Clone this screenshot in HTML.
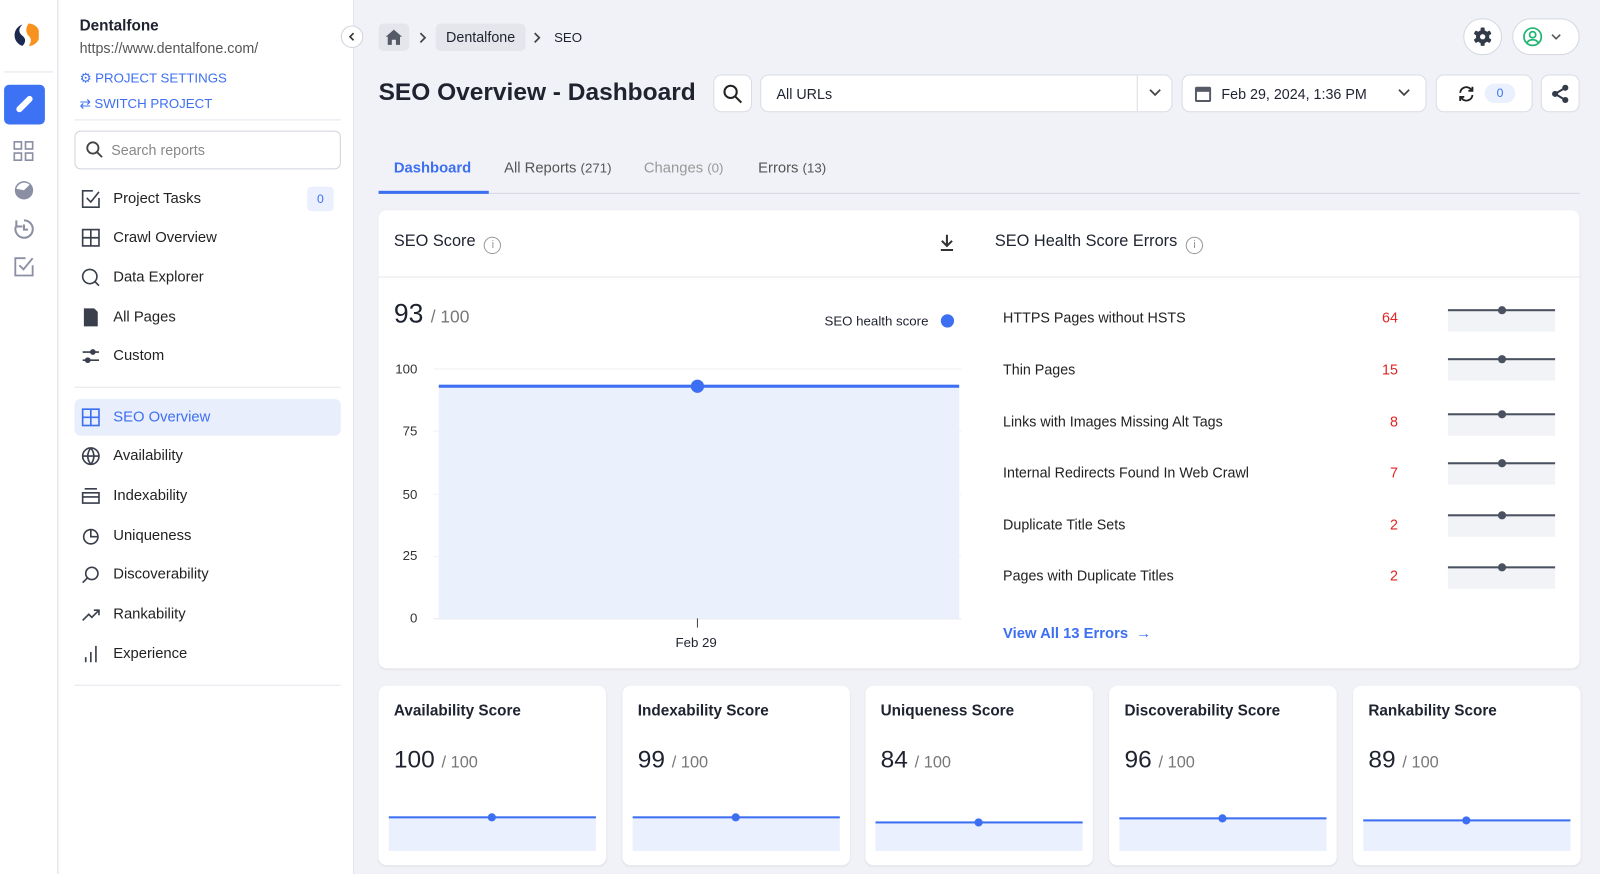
<!DOCTYPE html>
<html><head><meta charset="utf-8"><style>
*{box-sizing:border-box;margin:0;padding:0}
html,body{width:1600px;height:874px;overflow:hidden;background:#f1f2f7;font-family:"Liberation Sans",sans-serif;color:#1f2330}
#w{position:absolute;left:0;top:0;width:1568px;height:857px;transform:scale(1.0204);transform-origin:0 0}
.a{position:absolute}
.rail{left:0;top:0;width:57px;height:857px;background:#fff;border-right:1px solid #e3e5ec}
.side{left:58px;top:0;width:289px;height:857px;background:#fff;border-right:1px solid #e3e5ec}
.ni{position:absolute;left:15px;height:36px;width:261px;display:flex;align-items:center;font-size:14.5px;color:#222;border-radius:6px}
.ni svg{width:20px;height:20px;margin:0 12px 0 6px;fill:none;stroke:#3a3f4c;stroke-width:1.6}
.card{background:#fff;border-radius:8px;box-shadow:0 1px 2px rgba(0,0,0,.08)}
.btn{background:#fff;border:1px solid #d9dce4;border-radius:8px}
.sc{top:672px;width:223px;height:176px}
.sc h4{position:absolute;left:15px;top:16px;font-size:15px;font-weight:bold;color:#1f2330}
.sc .v{position:absolute;left:15px;top:59px;font-size:24px}
.sc .v span{font-size:16px;color:#777}
.sc .f{position:absolute;left:10px;right:10px;top:128px;height:34px;background:#eaf0fd;border-top:2px solid #3d6ff2}
.sc .d{position:absolute;width:8px;height:8px;border-radius:50%;background:#3d6ff2;left:97px;top:-5px}
.er{position:absolute;left:983px;font-size:14px;color:#222}
.en{position:absolute;left:1340px;width:30px;text-align:right;font-size:14px;color:#e02424}
.sp{position:absolute;left:1419px;width:105px;height:22px;background:#f2f3f6;border-top:2px solid #4a5160}
.sp i{position:absolute;left:49px;top:-5px;width:8px;height:8px;border-radius:50%;background:#4a5160}
.yl{position:absolute;width:40px;text-align:right;left:369px;font-size:13px;color:#333}
.chev{position:absolute}
</style></head><body><div id="w">
<div class="a rail">
<svg class="a" style="left:10px;top:20px" width="28" height="28" viewBox="0 0 28 28"><path d="M18 3a11 11 0 0 1 0 22c3-4 3-7 0-10s-3-8 0-12z" fill="#f7921e"/><path d="M12 4c-4 4-4 8 0 11s3 7 0 10A11 11 0 0 1 12 4z" fill="#1b2a4e"/></svg>
<div class="a" style="left:4px;top:70px;width:48px;height:1px;background:#e3e5ec"></div>
<div class="a" style="left:4px;top:83px;width:40px;height:39px;background:#3d72f5;border-radius:5px"></div>
<svg class="a" style="left:14px;top:92px" width="20" height="20" viewBox="0 0 20 20"><path d="M5 15L15 5" stroke="#fff" stroke-width="6" stroke-linecap="round"/></svg>
<svg class="a" style="left:13px;top:138px" width="21" height="21" viewBox="0 0 21 21" fill="none" stroke="#8a8fa3" stroke-width="1.6"><rect x="1" y="1" width="7" height="7"/><rect x="12" y="1" width="7" height="7"/><rect x="1" y="12" width="7" height="7"/><rect x="12" y="12" width="7" height="7"/></svg>
<svg class="a" style="left:13px;top:176px" width="21" height="21" viewBox="0 0 21 21"><circle cx="10.5" cy="10.5" r="9" fill="#8a8fa3"/><path d="M3 9a8 8 0 0 1 13-4L10.5 10.5z" fill="#fff"/></svg>
<svg class="a" style="left:13px;top:214px" width="21" height="21" viewBox="0 0 21 21" fill="none" stroke="#8a8fa3" stroke-width="2"><path d="M10.5 2a8.5 8.5 0 1 1-8 6M10.5 6v5h4M3 2v6h6"/></svg>
<svg class="a" style="left:13px;top:251px" width="21" height="21" viewBox="0 0 21 21" fill="none" stroke="#8a8fa3" stroke-width="1.8"><path d="M12 2H2v17h17V9M6 9l4 4 9-11"/></svg>
</div>
<div class="a side">
<div class="a" style="left:20px;top:17px;font-size:15px;font-weight:bold">Dentalfone</div>
<div class="a" style="left:20px;top:39px;font-size:14px;color:#555">https://www.dentalfone.com/</div>
<div class="a" style="left:20px;top:69px;font-size:13px;color:#3d6ff2">⚙ PROJECT SETTINGS</div>
<div class="a" style="left:20px;top:94px;font-size:13px;color:#3d6ff2">⇄ SWITCH PROJECT</div>
<div class="a" style="left:15px;top:117px;width:261px;height:1px;background:#e3e5ec"></div>
<div class="a" style="left:15px;top:128px;width:261px;height:38px;border:1px solid #cfd3dc;border-radius:6px;font-size:14px;color:#888;padding:10px 0 0 35px">Search reports</div>
<svg class="a" style="left:26px;top:138px" width="18" height="18" viewBox="0 0 18 18" fill="none" stroke="#444" stroke-width="1.8"><circle cx="7" cy="7" r="5.5"/><path d="M11 11l5 5"/></svg>
<div class="ni" style="top:177px"><svg viewBox="0 0 20 20"><path d="M12 2H2v16h16V9M6 9l4 4 8-10"/></svg>Project Tasks</div>
<div class="a" style="left:243px;top:183px;width:26px;height:24px;background:#eaf0fd;border-radius:4px;color:#3d6ff2;font-size:12px;text-align:center;line-height:24px">0</div>
<div class="ni" style="top:215px"><svg viewBox="0 0 20 20"><rect x="2" y="2" width="16" height="16"/><path d="M10 2v16M2 10h16"/></svg>Crawl Overview</div>
<div class="ni" style="top:254px"><svg viewBox="0 0 20 20"><circle cx="9" cy="9" r="7"/><path d="M14 14l4 4"/></svg>Data Explorer</div>
<div class="ni" style="top:293px"><svg viewBox="0 0 20 20"><path d="M4 2h9l3 3v13H4z" fill="#3a3f4c"/></svg>All Pages</div>
<div class="ni" style="top:331px"><svg viewBox="0 0 20 20"><path d="M2 6h16M2 14h16"/><circle cx="12" cy="6" r="2" fill="#3a3f4c"/><circle cx="7" cy="14" r="2" fill="#3a3f4c"/></svg>Custom</div>
<div class="a" style="left:15px;top:379px;width:261px;height:1px;background:#e3e5ec"></div>
<div class="ni" style="top:391px;background:#e8eefc;color:#3d6ff2"><svg viewBox="0 0 20 20" style="stroke:#3d6ff2"><rect x="2" y="2" width="16" height="16"/><path d="M10 2v16M2 10h16"/></svg>SEO Overview</div>
<div class="ni" style="top:429px"><svg viewBox="0 0 20 20"><circle cx="10" cy="10" r="8"/><path d="M2 10h16M10 2c-4 5-4 11 0 16M10 2c4 5 4 11 0 16"/></svg>Availability</div>
<div class="ni" style="top:468px"><svg viewBox="0 0 20 20"><path d="M4 3h12M2 7h16v10H2zM2 11h16"/></svg>Indexability</div>
<div class="ni" style="top:507px"><svg viewBox="0 0 20 20"><circle cx="10" cy="11" r="7"/><path d="M10 4v7h7"/></svg>Uniqueness</div>
<div class="ni" style="top:545px"><svg viewBox="0 0 20 20"><circle cx="11" cy="9" r="6"/><path d="M7 13l-5 5"/></svg>Discoverability</div>
<div class="ni" style="top:584px"><svg viewBox="0 0 20 20"><path d="M2 16l6-6 3 3 7-7M13 6h5v5"/></svg>Rankability</div>
<div class="ni" style="top:623px"><svg viewBox="0 0 20 20"><path d="M5 18v-5M10 18V8M15 18V2"/></svg>Experience</div>
<div class="a" style="left:15px;top:671px;width:261px;height:1px;background:#e3e5ec"></div>
</div>
<div class="a" style="left:334px;top:25px;width:22px;height:22px;border-radius:50%;background:#fff;border:1px solid #d0d3db"></div>
<svg class="a" style="left:340px;top:31px" width="10" height="10" viewBox="0 0 10 10"><path d="M6.5 1.5L3 5l3.5 3.5" stroke="#333" stroke-width="1.6" fill="none"/></svg>
<!-- breadcrumb -->
<div class="a" style="left:371px;top:23px;width:30px;height:27px;background:#e4e6ec;border-radius:5px"></div>
<svg class="a" style="left:377px;top:28px" width="18" height="17" viewBox="0 0 18 17"><path d="M9 1L1 8h2v8h4v-5h4v5h4V8h2z" fill="#555a66"/></svg>
<svg class="a" style="left:409px;top:31px" width="10" height="12" viewBox="0 0 10 12"><path d="M3 1.5L7.5 6 3 10.5" stroke="#444" stroke-width="1.7" fill="none"/></svg>
<div class="a" style="left:427px;top:23px;width:88px;height:27px;background:#e4e6ec;border-radius:5px;font-size:14px;text-align:center;line-height:27px">Dentalfone</div>
<svg class="a" style="left:521px;top:31px" width="10" height="12" viewBox="0 0 10 12"><path d="M3 1.5L7.5 6 3 10.5" stroke="#444" stroke-width="1.7" fill="none"/></svg>
<div class="a" style="left:543px;top:29px;font-size:13px">SEO</div>
<div class="a" style="left:1434px;top:18px;width:38px;height:36px;border-radius:18px;background:#fff;border:1px solid #d5d8e0"></div>
<svg class="a" style="left:1443px;top:26px" width="20" height="20" viewBox="0 0 20 20"><g fill="#333b48"><circle cx="10" cy="10" r="6.5"/><rect x="8" y="1" width="4" height="18" rx="1"/><rect x="8" y="1" width="4" height="18" rx="1" transform="rotate(60 10 10)"/><rect x="8" y="1" width="4" height="18" rx="1" transform="rotate(120 10 10)"/></g><circle cx="10" cy="10" r="2.6" fill="#fff"/></svg>
<div class="a" style="left:1482px;top:18px;width:66px;height:36px;border-radius:18px;background:#fff;border:1px solid #d5d8e0"></div>
<svg class="a" style="left:1492px;top:26px" width="20" height="20" viewBox="0 0 20 20" fill="none" stroke="#22b573" stroke-width="1.7"><circle cx="10" cy="10" r="8.5"/><circle cx="10" cy="8" r="3"/><path d="M4.5 16c2-4 9-4 11 0"/></svg>
<svg class="a" style="left:1519px;top:31px" width="12" height="10" viewBox="0 0 12 10"><path d="M2 3l4 4 4-4" stroke="#555" stroke-width="1.6" fill="none"/></svg>
<!-- title row -->
<div class="a" style="left:371px;top:77px;font-size:24px;font-weight:bold;color:#1f2330">SEO Overview - Dashboard</div>
<div class="a btn" style="left:699px;top:73px;width:38px;height:37px"></div>
<svg class="a" style="left:708px;top:82px" width="20" height="20" viewBox="0 0 20 20" fill="none" stroke="#222" stroke-width="2"><circle cx="8" cy="8" r="6"/><path d="M12.5 12.5l6 6"/></svg>
<div class="a btn" style="left:745px;top:73px;width:404px;height:37px;font-size:14px;padding:10px 0 0 15px">All URLs</div>
<div class="a" style="left:1114px;top:74px;width:1px;height:35px;background:#d9dce4"></div>
<svg class="a" style="left:1125px;top:85px" width="14" height="12" viewBox="0 0 14 12"><path d="M2 3l5 5 5-5" stroke="#444" stroke-width="1.7" fill="none"/></svg>
<div class="a btn" style="left:1158px;top:73px;width:240px;height:37px;font-size:14px;padding:10px 0 0 38px">Feb 29, 2024, 1:36 PM</div>
<svg class="a" style="left:1171px;top:83px" width="16" height="17" viewBox="0 0 16 17"><rect x="0" y="2" width="16" height="15" rx="2" fill="#555a66"/><rect x="2" y="7" width="12" height="8" fill="#fff"/></svg>
<svg class="a" style="left:1369px;top:85px" width="14" height="12" viewBox="0 0 14 12"><path d="M2 3l5 5 5-5" stroke="#444" stroke-width="1.7" fill="none"/></svg>
<div class="a btn" style="left:1407px;top:73px;width:95px;height:37px"></div>
<svg class="a" style="left:1427px;top:82px" width="20" height="20" viewBox="0 0 20 20" fill="none" stroke="#222" stroke-width="1.8"><path d="M4 9a6 6 0 0 1 10-4l2 2M16 11a6 6 0 0 1-10 4l-2-2"/><path d="M16 3v4h-4M4 17v-4h4"/></svg>
<div class="a" style="left:1455px;top:82px;width:30px;height:19px;background:#eaf0fd;border-radius:10px;color:#3d6ff2;font-size:12px;text-align:center;line-height:19px">0</div>
<div class="a btn" style="left:1510px;top:73px;width:38px;height:37px"></div>
<svg class="a" style="left:1519px;top:82px" width="20" height="20" viewBox="0 0 20 20"><path d="M15 4L5 10l10 6" stroke="#333b48" stroke-width="2" fill="none"/><circle cx="15" cy="4" r="3" fill="#333b48"/><circle cx="5" cy="10" r="3" fill="#333b48"/><circle cx="15" cy="16" r="3" fill="#333b48"/></svg>
<!-- tabs -->
<div class="a" style="left:371px;top:189px;width:1177px;height:1px;background:#d5d8e0"></div>
<div class="a" style="left:371px;top:187px;width:108px;height:3px;background:#3d6ff2"></div>
<div class="a" style="left:386px;top:157px;font-size:14.5px;color:#3d6ff2;font-weight:bold">Dashboard</div>
<div class="a" style="left:494px;top:157px;font-size:14.5px;color:#555">All Reports <span style="font-size:13px">(271)</span></div>
<div class="a" style="left:631px;top:157px;font-size:14.5px;color:#999">Changes <span style="font-size:13px">(0)</span></div>
<div class="a" style="left:743px;top:157px;font-size:14.5px;color:#555">Errors <span style="font-size:13px">(13)</span></div>
<!-- main card -->
<div class="a card" style="left:371px;top:206px;width:1177px;height:449px"></div>
<div class="a" style="left:371px;top:271px;width:1177px;height:1px;background:#e6e8ee"></div>
<div class="a" style="left:386px;top:228px;font-size:16px">SEO Score <span style="display:inline-block;width:17px;height:17px;border:1.5px solid #999;border-radius:50%;font-size:11px;color:#999;text-align:center;line-height:15px;vertical-align:-2px;margin-left:4px">i</span></div>
<svg class="a" style="left:920px;top:229px" width="16" height="17" viewBox="0 0 16 17"><path d="M8 1v10M3 7l5 5 5-5M2 16h12" stroke="#333" stroke-width="2" fill="none"/></svg>
<div class="a" style="left:975px;top:228px;font-size:16px">SEO Health Score Errors <span style="display:inline-block;width:17px;height:17px;border:1.5px solid #999;border-radius:50%;font-size:11px;color:#999;text-align:center;line-height:15px;vertical-align:-2px;margin-left:4px">i</span></div>
<div class="a" style="left:386px;top:292px;font-size:26px">93 <span style="font-size:17px;color:#777">/ 100</span></div>
<div class="a" style="left:808px;top:307px;font-size:13px">SEO health score</div>
<div class="a" style="left:922px;top:308px;width:13px;height:13px;background:#3d6ff2;border-radius:50%"></div>
<div class="yl" style="top:354px">100</div><div class="yl" style="top:415px">75</div><div class="yl" style="top:477px">50</div><div class="yl" style="top:537px">25</div><div class="yl" style="top:598px">0</div>
<div class="a" style="left:425px;top:361px;width:517px;height:1px;background:#eff0f3"></div>
<div class="a" style="left:425px;top:422px;width:517px;height:1px;background:#eff0f3"></div>
<div class="a" style="left:425px;top:484px;width:517px;height:1px;background:#eff0f3"></div>
<div class="a" style="left:425px;top:545px;width:517px;height:1px;background:#eff0f3"></div>
<div class="a" style="left:430px;top:377px;width:510px;height:229px;background:#ebf0fd;border-top:3px solid #3d6ff2"></div>
<div class="a" style="left:425px;top:606px;width:517px;height:1px;background:#e6e8ee"></div>
<div class="a" style="left:677px;top:372px;width:13px;height:13px;border-radius:50%;background:#3d6ff2"></div>
<div class="a" style="left:683px;top:606px;width:1px;height:9px;background:#444"></div>
<div class="a" style="left:662px;top:622px;font-size:13px">Feb 29</div>
<div class="er" style="top:303px">HTTPS Pages without HSTS</div><div class="en" style="top:303px">64</div><div class="sp" style="top:303px"><i></i></div>
<div class="er" style="top:354px">Thin Pages</div><div class="en" style="top:354px">15</div><div class="sp" style="top:351px"><i></i></div>
<div class="er" style="top:405px">Links with Images Missing Alt Tags</div><div class="en" style="top:405px">8</div><div class="sp" style="top:405px"><i></i></div>
<div class="er" style="top:455px">Internal Redirects Found In Web Crawl</div><div class="en" style="top:455px">7</div><div class="sp" style="top:453px"><i></i></div>
<div class="er" style="top:506px">Duplicate Title Sets</div><div class="en" style="top:506px">2</div><div class="sp" style="top:504px"><i></i></div>
<div class="er" style="top:556px">Pages with Duplicate Titles</div><div class="en" style="top:556px">2</div><div class="sp" style="top:555px"><i></i></div>
<div class="a" style="left:983px;top:613px;font-size:14.5px;font-weight:bold;color:#3d6ff2">View All 13 Errors &nbsp;→</div>
<!-- score cards -->
<div class="a card sc" style="left:371px"><h4>Availability Score</h4><div class="v">100 <span>/ 100</span></div><div class="f"><div class="d"></div></div></div>
<div class="a card sc" style="left:610px"><h4>Indexability Score</h4><div class="v">99 <span>/ 100</span></div><div class="f"><div class="d"></div></div></div>
<div class="a card sc" style="left:848px"><h4>Uniqueness Score</h4><div class="v">84 <span>/ 100</span></div><div class="f" style="top:133px;height:29px"><div class="d"></div></div></div>
<div class="a card sc" style="left:1087px"><h4>Discoverability Score</h4><div class="v">96 <span>/ 100</span></div><div class="f" style="top:129px;height:33px"><div class="d"></div></div></div>
<div class="a card sc" style="left:1326px"><h4>Rankability Score</h4><div class="v">89 <span>/ 100</span></div><div class="f" style="top:131px;height:31px"><div class="d"></div></div></div>
</div></body></html>
